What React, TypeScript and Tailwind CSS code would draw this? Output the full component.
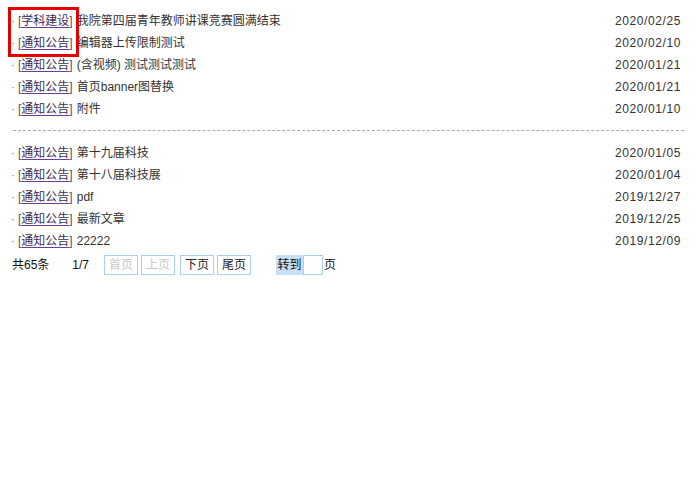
import React from 'react';

interface NewsItem {
  cat: string;
  title: string;
  date: string;
}

const topList: NewsItem[] = [
  { cat: '学科建设', title: '我院第四届青年教师讲课竞赛圆满结束', date: '2020/02/25' },
  { cat: '通知公告', title: '编辑器上传限制测试', date: '2020/02/10' },
  { cat: '通知公告', title: '(含视频) 测试测试测试', date: '2020/01/21' },
  { cat: '通知公告', title: '首页banner图替换', date: '2020/01/21' },
  { cat: '通知公告', title: '附件', date: '2020/01/10' },
];

const bottomList: NewsItem[] = [
  { cat: '通知公告', title: '第十九届科技', date: '2020/01/05' },
  { cat: '通知公告', title: '第十八届科技展', date: '2020/01/04' },
  { cat: '通知公告', title: 'pdf', date: '2019/12/27' },
  { cat: '通知公告', title: '最新文章', date: '2019/12/25' },
  { cat: '通知公告', title: '22222', date: '2019/12/09' },
];

const Row: React.FC<{ item: NewsItem }> = ({ item }) => (
  <li className="flex items-center justify-between h-[22px] pr-[3px]">
    <div className="flex items-center whitespace-nowrap">
      <span className="text-[#888] w-[7px]">·</span>
      <span className="text-[#555]">[</span>
      <a href="#" className="text-[#3a2d55] underline decoration-[#6a3aa0] underline-offset-2">
        {item.cat}
      </a>
      <span className="text-[#555]">]</span>
      <span className="ml-[4px] text-[#333]">{item.title}</span>
    </div>
    <span className="text-[#333] tracking-[0.6px]">{item.date}</span>
  </li>
);

const PageBtn: React.FC<{ label: string; disabled?: boolean; className?: string }> = ({
  label,
  disabled,
  className,
}) => (
  <span
    className={`inline-flex items-center justify-center w-[34px] h-[20px] border border-[#a9d0ef] ${
      disabled ? 'text-[#c8c8c8]' : 'text-[#222]'
    } ${className ?? ''}`}
  >
    {label}
  </span>
);

export default function App() {
  return (
    <div
      className="relative w-[700px] h-[500px] bg-white text-[12px] leading-none"
      style={{ fontFamily: '"Liberation Sans", "Noto Sans CJK SC", sans-serif' }}
    >
      <div className="pl-[11px] pt-[10px] w-[684px]">
        <ul>
          {topList.map((item, i) => (
            <Row key={i} item={item} />
          ))}
        </ul>
        <div className="mt-[10px] mb-[11px] ml-[2px] border-t border-dashed border-[#aaa]" />
        <ul>
          {bottomList.map((item, i) => (
            <Row key={i} item={item} />
          ))}
        </ul>

        {/* pager */}
        <div className="flex items-center h-[22px] mt-[2px] text-[#111]">
          <span className="ml-[1px]">共65条</span>
          <span className="ml-[23px]">1/7</span>
          <PageBtn label="首页" disabled className="ml-[15px]" />
          <PageBtn label="上页" disabled className="ml-[3px]" />
          <PageBtn label="下页" className="ml-[5px]" />
          <PageBtn label="尾页" className="ml-[3px]" />
          <span className="ml-[25px] inline-flex items-center justify-center h-[20px] w-[27px] bg-[#c6e0f8]">转到</span>
          <span className="w-[20px] h-[20px] border border-[#a9d0ef]" />
          <span className="ml-[1px]">页</span>
        </div>
      </div>

      {/* annotation box */}
      <div className="absolute left-[8px] top-[7px] w-[71px] h-[50px] border-[3px] border-[#e50000]" />
    </div>
  );
}
